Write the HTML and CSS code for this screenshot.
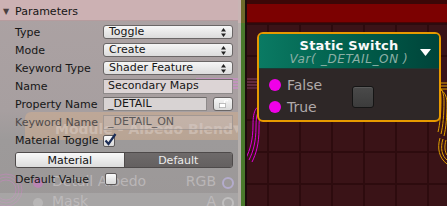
FILE: index.html
```html
<!DOCTYPE html>
<html>
<head>
<meta charset="utf-8">
<link rel="stylesheet" href="styles.css">
</head>
<body>
<div class="app">
  <div class="inspector">
    <div class="ghost">
      <svg class="ghost-wires" width="238" height="206" viewBox="0 0 238 206">
        <g fill="none" stroke="rgba(225,120,215,0.35)" stroke-width="1">
          <circle cx="6" cy="190" r="10"/>
          <circle cx="6" cy="190" r="13"/>
          <circle cx="6" cy="190" r="16"/>
        </g>
        <g stroke="rgba(235,130,235,0.75)" stroke-width="1">
          <line x1="196" y1="79" x2="238" y2="79"/>
          <line x1="196" y1="82" x2="238" y2="82"/>
          <line x1="196" y1="85" x2="238" y2="85"/>
          <line x1="196" y1="88" x2="238" y2="88"/>
        </g>
        <circle cx="38" cy="183" r="5" fill="rgba(220,110,210,0.45)"/>
        <circle cx="38" cy="203" r="5" fill="rgba(220,220,220,0.4)"/>
        <circle cx="228" cy="183" r="5" fill="none" stroke="rgba(190,180,225,0.7)" stroke-width="2"/>
        <circle cx="228" cy="203" r="5" fill="none" stroke="rgba(220,220,220,0.6)" stroke-width="2"/>
      </svg>
      <div class="ghost-node">
        <div class="ghost-head"><span>Module - Albedo Blend</span><span class="ghost-tri">▼</span></div>
        <div class="ghost-row first"><span>Detail Albedo</span><span>RGB</span></div>
        <div class="ghost-row second"><span>Mask</span><span>A</span></div>
      </div>
    </div>

    <div class="header"><span class="fold">▼</span>Parameters</div>

    <div class="rows">
      <div class="row">
        <span class="label">Type</span>
        <div class="popup"><span>Toggle</span><svg class="arr" width="5" height="9" viewBox="0 0 5 9"><path d="M0 3.5 L2.5 0 L5 3.5Z M0 5.5 L2.5 9 L5 5.5Z" fill="#222"/></svg></div>
      </div>
      <div class="row">
        <span class="label">Mode</span>
        <div class="popup"><span>Create</span><svg class="arr" width="5" height="9" viewBox="0 0 5 9"><path d="M0 3.5 L2.5 0 L5 3.5Z M0 5.5 L2.5 9 L5 5.5Z" fill="#222"/></svg></div>
      </div>
      <div class="row">
        <span class="label">Keyword Type</span>
        <div class="popup"><span>Shader Feature</span><svg class="arr" width="5" height="9" viewBox="0 0 5 9"><path d="M0 3.5 L2.5 0 L5 3.5Z M0 5.5 L2.5 9 L5 5.5Z" fill="#222"/></svg></div>
      </div>
      <div class="row">
        <span class="label">Name</span>
        <div class="field">Secondary Maps</div>
      </div>
      <div class="row">
        <span class="label">Property Name</span>
        <div class="field-lock">
          <div class="field">_DETAIL</div>
          <div class="lock-btn">
            <svg width="9" height="8" viewBox="0 0 9 8"><path d="M5.5 3.5 V2 a2 2 0 0 1 4 0" fill="none" stroke="#fff" stroke-width="1.2"/><rect x="0.5" y="3.5" width="6" height="4.2" fill="#fff" stroke="#9a9a9a" stroke-width="0.6"/></svg>
          </div>
        </div>
      </div>
      <div class="row">
        <span class="label disabled">Keyword Name</span>
        <div class="field off">_DETAIL_ON</div>
      </div>
      <div class="row tall">
        <span class="label">Material Toggle</span>
        <div class="check on">
          <svg width="14" height="14" viewBox="0 0 14 14"><path d="M2.5 7.5 L5.5 11 L12.5 1" fill="none" stroke="#1b2c55" stroke-width="2.2"/></svg>
        </div>
      </div>
      <div class="row bar">
        <div class="toolbar">
          <div class="tb-btn">Material</div>
          <div class="tb-btn active">Default</div>
        </div>
      </div>
      <div class="row">
        <span class="label">Default Value</span>
        <div class="check small"></div>
      </div>
    </div>
  </div>

  <div class="edge">
    <div class="edge-light"></div>
    <div class="edge-green"></div>
    <div class="edge-dark"></div>
  </div>

  <div class="graph">
    <div class="band-dark"></div>
    <div class="band-red"></div>
    <svg class="wires" width="200" height="206" viewBox="247 0 200 206">
      <g stroke="rgba(200,110,170,0.55)" stroke-width="1" fill="none">
        <line x1="247" y1="79" x2="268" y2="79"/>
        <line x1="247" y1="82" x2="268" y2="82"/>
        <line x1="247" y1="85" x2="268" y2="85"/>
        <line x1="247" y1="88" x2="268" y2="88"/>
      </g>
      <g stroke="#e000d8" stroke-width="1" fill="none">
        <path d="M268 104 C256 104 253 110 253 125 C253 140 250 150 246 158"/>
        <path d="M268 107 C258 107 256 113 256 127 C256 142 253 152 249 160"/>
        <path d="M268 110 C260 110 259 116 259 129 C259 144 256 154 252 162"/>
      </g>
      <g stroke="#e0a000" stroke-width="1" fill="none">
        <path d="M428 81 C440 81 441 90 441 100 C441 112 440 124 438 132"/>
        <path d="M428 84 C442 84 444 92 444 102 C444 114 443 126 441 134"/>
        <path d="M428 87 C444 87 447 95 447 104 C447 116 446 128 444 136"/>
        <path d="M441 83 L447 83"/>
        <path d="M441 86 L447 86"/>
        <path d="M441 89 L447 89"/>
        <path d="M440 138 C437 148 439 158 447 164"/>
        <path d="M443 139 C440 148 442 156 447 160"/>
        <path d="M446 140 C444 147 445 152 447 155"/>
      </g>
    </svg>
    <div class="node">
      <div class="node-head">
        <div class="node-title">Static Switch</div>
        <div class="node-sub">Var( _DETAIL_ON )</div>
        <svg class="node-tri" width="11" height="7" viewBox="0 0 11 7"><path d="M0 0 H11 L5.5 7Z" fill="#fff"/></svg>
      </div>
      <div class="node-body">
        <div class="ports">
          <div class="port"><span class="dot"></span><span>False</span></div>
          <div class="port"><span class="dot"></span><span>True</span></div>
        </div>
        <div class="node-btn"></div>
        <div class="out"><span class="dot"></span></div>
      </div>
    </div>
  </div>
</div>
</body>
</html>
```

FILE: styles.css
```css
* { box-sizing: border-box; }
html, body { margin: 0; padding: 0; }
body {
  width: 447px;
  height: 206px;
  overflow: hidden;
  font-family: "DejaVu Sans", Verdana, sans-serif;
  font-size: 11px;
  color: #161616;
  background: #3a1317;
}
.app {
  display: flex;
  width: 447px;
  height: 206px;
}

/* ---------- inspector ---------- */
.inspector {
  position: relative;
  width: 238px;
  flex: none;
  background: linear-gradient(#aca2a3 0, #a79fa0 110px, #9d9a9a 140px, #9c9898 100%);
  overflow: hidden;
}
.ghost {
  position: absolute;
  inset: 0;
  pointer-events: none;
}
.ghost-wires { position: absolute; left: 0; top: 0; }
.ghost-node {
  position: absolute;
  left: 25px;
  top: 112px;
  width: 213px;
  height: 94px;
}
.ghost-head {
  height: 28px;
  border-radius: 6px 0 0 0;
  background: rgba(225, 180, 140, 0.4);
  display: flex;
  align-items: center;
  justify-content: space-between;
  padding: 5px 2px 0 30px;
  font-size: 14px;
  font-weight: bold;
  color: rgba(232, 222, 218, 0.4);
  white-space: nowrap;
}
.ghost-tri { font-size: 10px; }
.ghost-row {
  position: absolute;
  left: 27px;
  right: 22px;
  display: flex;
  justify-content: space-between;
  font-size: 14px;
  color: rgba(200, 196, 198, 0.7);
}
.ghost-row.first { top: 61px; }
.ghost-row.second {
  top: 81px;
  left: -25px;
  right: 0;
  padding: 0 22px 0 52px;
  height: 13px;
  line-height: 17px;
  background: rgba(190, 188, 188, 0.35);
  overflow: visible;
}

.header {
  position: relative;
  height: 21px;
  background: #ccb1b3;
  border-bottom: 1px solid #b69c9e;
  display: flex;
  align-items: center;
  padding-left: 3px;
  padding-top: 2px;
  color: #151515;
}
.fold {
  font-size: 8px;
  color: #4a4040;
  margin-right: 3px;
  width: 9px;
}
.rows {
  position: relative;
  padding: 2px 5px 0 15px;
}
.row {
  display: flex;
  align-items: center;
  height: 18px;
}
.row.tall { height: 19px; }
.row.bar { height: 20px; }
.label {
  width: 88px;
  flex: none;
  white-space: nowrap;
}
.label.disabled { color: #4f4b4b; }

.popup {
  width: 130px;
  height: 14px;
  border: 1px solid #6a6666;
  border-radius: 3px;
  background: linear-gradient(#f6f6f6, #dcdcdc);
  display: flex;
  align-items: center;
  justify-content: space-between;
  padding: 0 6px 0 5px;
  font-size: 11px;
  line-height: 12px;
}
.arr { flex: none; }
.field {
  width: 130px;
  height: 15px;
  border: 1px solid #8e8a8a;
  border-top-color: #6f6b6b;
  background: #dcd4d5;
  padding: 0 4px;
  line-height: 12px;
  white-space: nowrap;
}
.field.off {
  background: rgba(210, 200, 200, 0.35);
  border-color: rgba(130, 125, 125, 0.5);
  color: #5c5858;
}
.field-lock {
  display: flex;
  width: 130px;
  gap: 6px;
}
.field-lock .field {
  width: 104px;
  height: 14px;
  background: #d8d3d3;
}
.lock-btn {
  width: 20px;
  height: 14px;
  border: 1px solid #6a6666;
  border-radius: 3px;
  background: linear-gradient(#f6f6f6, #dadada);
  display: flex;
  align-items: center;
  justify-content: center;
}
.check {
  position: relative;
  width: 12px;
  height: 12px;
  border: 1px solid #5e5a5a;
  border-radius: 2px;
  background: linear-gradient(#fafafa, #d8d8d8);
}
.check.small { margin-left: 2px; }
.check svg {
  position: absolute;
  left: -1px;
  top: -3px;
}
.toolbar {
  display: flex;
  width: 218px;
  height: 16px;
  border: 1px solid #4e4a4a;
  border-radius: 3px;
  overflow: hidden;
}
.tb-btn {
  flex: 1;
  display: flex;
  align-items: center;
  justify-content: center;
  background: linear-gradient(#f8f8f8, #dcdcdc);
  color: #111;
}
.tb-btn.active {
  background: linear-gradient(#6e6a6a, #646060);
  color: #ececec;
  border-left: 1px solid #4e4a4a;
}

/* ---------- edge ---------- */
.edge {
  display: flex;
  flex: none;
  width: 9px;
}
.edge-light { width: 3px; background: linear-gradient(#c9b4b4 0 23px, #b5afac 23px); }
.edge-green { width: 4px; background: linear-gradient(#6e6a2a 0 23px, #4a7a2c 23px); }
.edge-dark { width: 2px; background: #1c0c0c; }

/* ---------- graph ---------- */
.graph {
  position: relative;
  flex: 1;
  background-color: #3a1317;
  background-image:
    linear-gradient(90deg, #2d0b0e 2px, transparent 2px),
    linear-gradient(#2d0b0e 2px, transparent 2px);
  background-size: 32px 32px;
  background-position: 20px 23px;
  overflow: hidden;
}
.band-dark { height: 4px; background: #3b0707; }
.band-red {
  height: 19px;
  background: #7c0101;
  border-bottom: 1px solid #4a0404;
}
.wires { position: absolute; left: 0; top: 0; }
.node {
  position: absolute;
  left: 10px;
  top: 32px;
  width: 184px;
  height: 90px;
  border: 2px solid #e89a00;
  border-radius: 6px;
  background: #2e2727;
  overflow: hidden;
  display: flex;
  flex-direction: column;
}
.node-head {
  position: relative;
  height: 35px;
  background: linear-gradient(90deg, #0a7a63, #005a48 60%, #00443a);
  border-bottom: 1px solid #1c3a34;
  display: flex;
  flex-direction: column;
  align-items: center;
  padding-top: 5px;
}
.node-title {
  font-size: 13px;
  font-weight: bold;
  color: #fafafa;
  line-height: 14px;
  letter-spacing: 0.2px;
}
.node-sub {
  font-size: 12px;
  font-style: italic;
  color: #8cb0a6;
  line-height: 13px;
  letter-spacing: 0.6px;
}
.node-tri {
  position: absolute;
  right: 8px;
  top: 15px;
}
.node-body {
  position: relative;
  flex: 1;
  display: flex;
  padding: 8px 0 0 10px;
}
.ports {
  display: flex;
  flex-direction: column;
  gap: 6px;
}
.port {
  display: flex;
  align-items: center;
  gap: 6px;
  font-size: 14px;
  color: #b0aaaa;
  height: 16px;
}
.dot {
  width: 12px;
  height: 12px;
  border-radius: 50%;
  background: #f000e8;
  flex: none;
}
.node-btn {
  position: absolute;
  left: 93px;
  top: 17px;
  width: 22px;
  height: 22px;
  border: 1px solid #151515;
  border-radius: 3px;
  background: linear-gradient(#4a4a4a, #3c3c3c);
  box-shadow: inset 0 1px 0 #5a5a5a;
}
.out {
  position: absolute;
  right: 10px;
  top: 10px;
}
```
